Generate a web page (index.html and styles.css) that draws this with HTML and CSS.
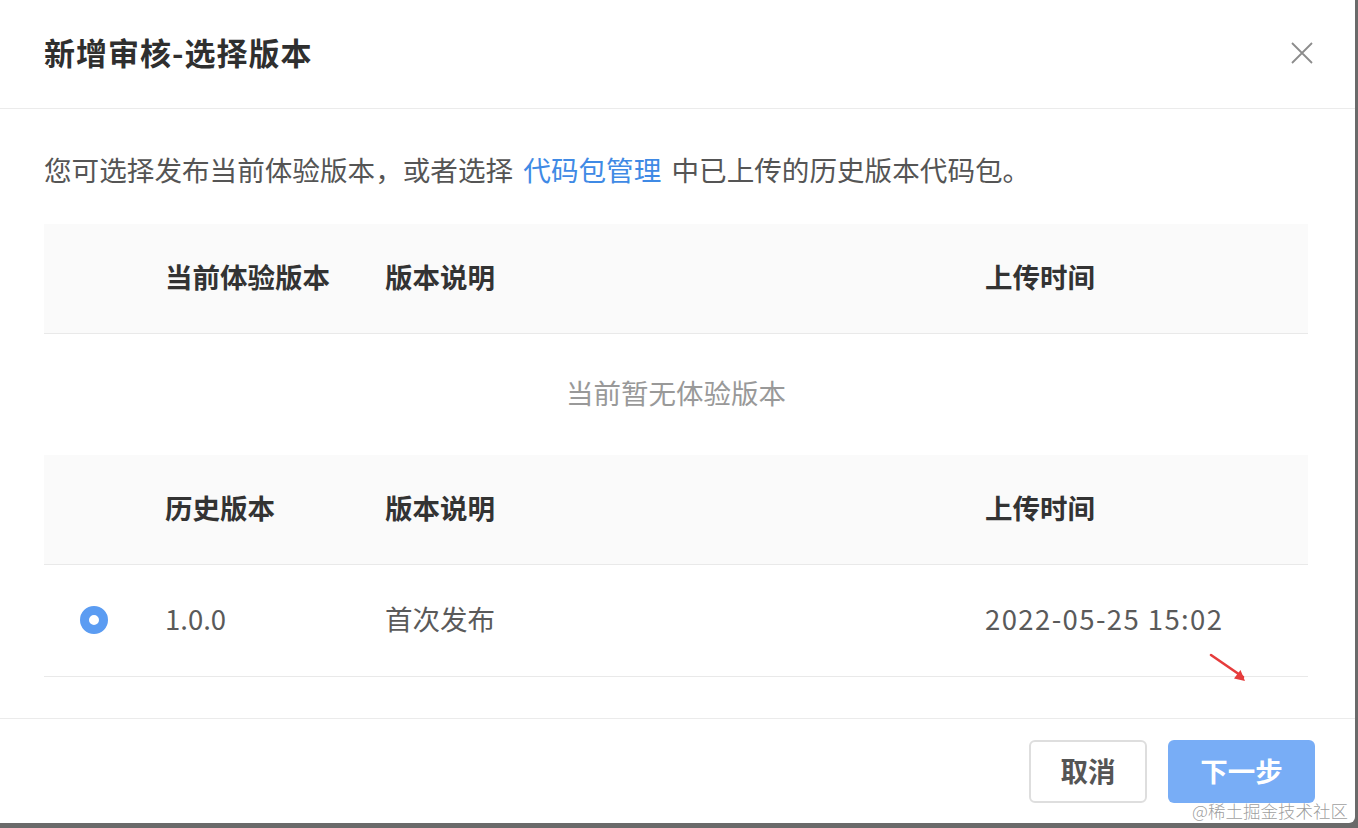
FILE: index.html
```html
<!DOCTYPE html>
<html lang="zh-CN">
<head>
<meta charset="utf-8">
<title>新增审核-选择版本</title>
<link rel="stylesheet" href="styles.css">
</head>
<body>
<div class="dialog">
  <div class="dialog-header">
    <h1 class="dialog-title">新增审核-选择版本</h1>
    <button class="close-btn" aria-label="关闭">
      <svg width="22" height="22" viewBox="0 0 22 22"><path d="M1 1 L21 21 M21 1 L1 21" stroke="#8c8c8c" stroke-width="1.8" fill="none"/></svg>
    </button>
  </div>
  <div class="dialog-body">
    <p class="intro">您可选择发布当前体验版本，或者选择 <a class="link">代码包管理</a> 中已上传的历史版本代码包。</p>
    <div class="table">
      <div class="row head">
        <div class="cell"></div>
        <div class="cell">当前体验版本</div>
        <div class="cell">版本说明</div>
        <div class="cell">上传时间</div>
      </div>
      <div class="empty">当前暂无体验版本</div>
    </div>
    <div class="table">
      <div class="row head">
        <div class="cell"></div>
        <div class="cell">历史版本</div>
        <div class="cell">版本说明</div>
        <div class="cell">上传时间</div>
      </div>
      <div class="row data">
        <div class="cell"><span class="radio"></span></div>
        <div class="cell">1.0.0</div>
        <div class="cell">首次发布</div>
        <div class="cell date">2022-05-25 15:02</div>
      </div>
    </div>
  </div>
  <div class="dialog-footer">
    <button class="btn btn-default">取消</button>
    <button class="btn btn-primary">下一步</button>
  </div>
  <svg class="arrow" width="44" height="34" viewBox="0 0 44 34"><path d="M2 2 L34 24" stroke="#e63c3c" stroke-width="2.6" stroke-linecap="round"/><path d="M36 28 L25 25.5 L31.5 17 Z" fill="#e63c3c"/></svg>
  <div class="watermark">@稀土掘金技术社区</div>
</div>
</body>
</html>
```
FILE: styles.css
```css
* { box-sizing: border-box; }
html, body { margin: 0; padding: 0; }
body {
  width: 1358px;
  height: 828px;
  background: #6a6a6a;
  font-family: "Noto Sans CJK SC", "Noto Sans", sans-serif;
  overflow: hidden;
}
.dialog {
  position: relative;
  width: 1355px;
  height: 823px;
  background: #fff;
  border-bottom-right-radius: 6px;
  display: flex;
  flex-direction: column;
}
.dialog-header {
  height: 109px;
  border-bottom: 1px solid #ebebeb;
  display: flex;
  align-items: center;
  justify-content: space-between;
  padding: 0 44px 2px 44px;
}
.dialog-title {
  margin: 0;
  font-size: 31px;
  font-weight: 600;
  color: #2f2f2f;
  letter-spacing: 1px;
  line-height: 40px;
  padding-bottom: 3px;
}
.close-btn {
  border: 0;
  background: none;
  padding: 0;
  margin-right: -2px;
  width: 22px;
  height: 22px;
  display: flex;
}
.dialog-body {
  padding: 40px 47px 0 44px;
  flex: 1;
}
.intro {
  margin: 0 0 33px 0;
  font-size: 27.6px;
  line-height: 40px;
  padding-bottom: 2px;
  color: #555;
}
.link { color: #3f8ae5; margin: 0 4px; }
.table { width: 1264px; }
.row {
  display: grid;
  grid-template-columns: 121px 220px 600px 1fr;
  align-items: center;
  border-bottom: 1px solid #e9e9e9;
  font-size: 27.5px;
}
.row.head {
  height: 110px;
  background: #fafafa;
  color: #333;
  font-weight: 600;
}
.row.data {
  height: 112px;
  color: #5a5a5a;
}
.cell { line-height: 40px; padding-bottom: 5px; }
.date { letter-spacing: 1.4px; }
.radio {
  display: block;
  margin-left: 36px;
  margin-top: 4px;
  width: 28px;
  height: 28px;
  border-radius: 50%;
  background: #fff;
  border: 9px solid #5b9cf2;
}
.empty {
  height: 121px;
  display: flex;
  align-items: center;
  justify-content: center;
  font-size: 27.5px;
  color: #999;
  padding-bottom: 6px;
}
.dialog-footer {
  height: 105px;
  border-top: 1px solid #ebebeb;
  display: flex;
  justify-content: flex-end;
  gap: 21px;
  padding: 21px 40px 0 0;
}
.btn {
  height: 63px;
  border-radius: 6px;
  font-family: inherit;
  font-size: 27.5px;
  font-weight: 600;
  padding: 0 0 4px 0;
}
.btn-default {
  width: 118px;
  background: #fff;
  border: 2px solid #dedede;
  color: #555;
}
.btn-primary {
  width: 147px;
  background: #78adf6;
  border: 0;
  color: #fff;
}
.arrow {
  position: absolute;
  left: 1209px;
  top: 653px;
}
.watermark {
  position: absolute;
  left: 1192px;
  top: 799px;
  font-size: 17.5px;
  line-height: 24px;
  color: rgba(140, 140, 140, 0.85);
  font-weight: 300;
  white-space: nowrap;
}
```
